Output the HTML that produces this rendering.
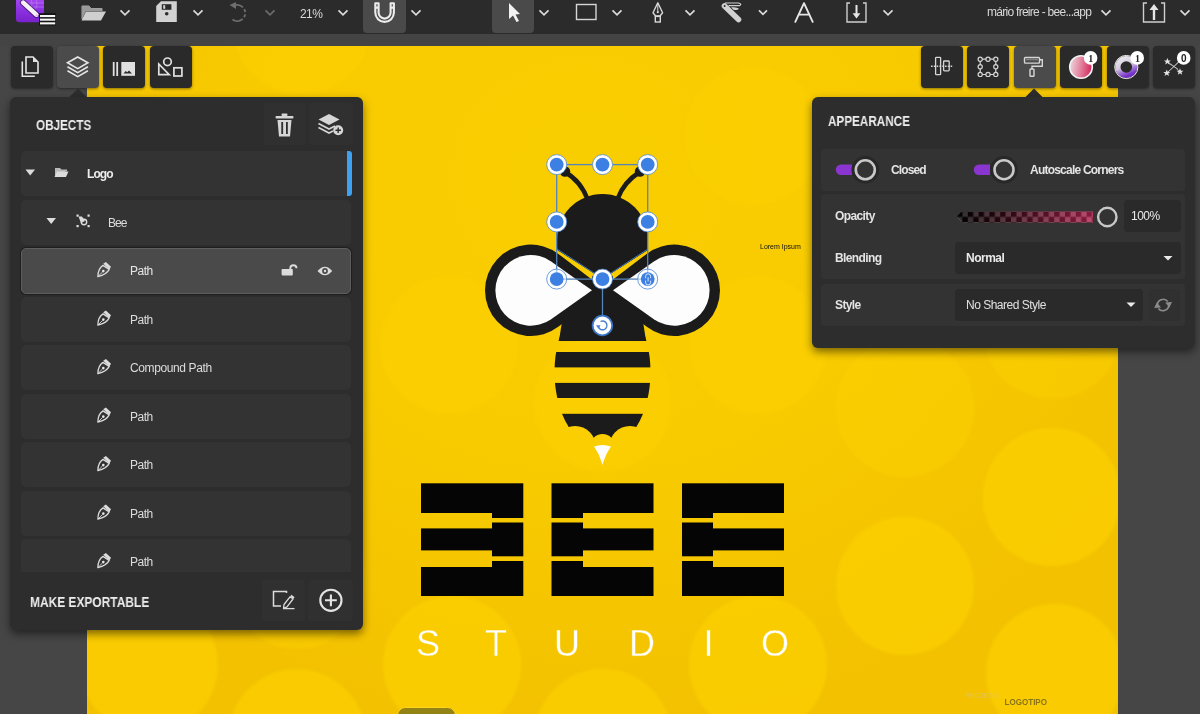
<!DOCTYPE html>
<html><head><meta charset="utf-8">
<style>
*{margin:0;padding:0;box-sizing:border-box}
html,body{width:1200px;height:714px;overflow:hidden;background:#464646;font-family:"Liberation Sans",sans-serif;color:#e2e2e2}
svg{position:absolute;overflow:visible;will-change:transform}
#top{position:absolute;left:0;top:0;width:1200px;height:34px;background:#2b2b2b}
#band{position:absolute;left:0;top:34px;width:1200px;height:12px;background:#444}
#canvas{position:absolute;left:87px;top:46px;width:1031px;height:668px;background:radial-gradient(ellipse 640px 560px at 500px 130px,#f9ce00 0%,#f8cb00 50%,#f3c100 100%);overflow:hidden}
.btn{position:absolute;top:46px;width:41.5px;height:42px;background:#2a2a2a;border-radius:4px;box-shadow:0 1px 3px rgba(0,0,0,.45)}
.rb{width:42px}
.btn.sel{background:#4b4b4b}
.panel{position:absolute;background:#2d2d2d;border-radius:6px;box-shadow:0 4px 9px rgba(0,0,0,.5)}
.row{position:absolute;left:11px;width:330px;height:45px;background:#333;border-radius:5px}
.row.sel{background:#4a4a4a;border:1px solid #5e5e5e;box-shadow:0 0 1px 1px rgba(0,0,0,.35);height:46px}
.t{position:absolute;white-space:nowrap;line-height:1;will-change:transform}
.hbtn{position:absolute;background:#303030;border-radius:3px}
</style></head><body>
<div id="top"></div>
<div id="band"></div>
<div id="canvas">
<svg width="1031" height="668" viewBox="87 46 1031 668" style="left:0;top:0">
  <defs><filter id="bl" x="-20%" y="-20%" width="140%" height="140%"><feGaussianBlur stdDeviation="1.6"/></filter></defs><g fill="#fcd200" filter="url(#bl)"><g opacity=".65"><circle cx="149" cy="665" r="69"/><circle cx="297" cy="738" r="69"/><circle cx="452" cy="665" r="69"/><circle cx="905" cy="586" r="69"/><circle cx="1052" cy="497" r="69"/><circle cx="1055" cy="673" r="69"/><circle cx="758" cy="665" r="69"/><circle cx="603" cy="738" r="69"/></g><g opacity=".4"><circle cx="603" cy="403" r="69"/><circle cx="449" cy="345" r="69"/><circle cx="758" cy="345" r="69"/><circle cx="905" cy="408" r="69"/><circle cx="754" cy="136" r="69"/><circle cx="1052" cy="330" r="69"/><circle cx="297" cy="420" r="69"/><circle cx="149" cy="345" r="69"/><circle cx="302" cy="26" r="69"/><circle cx="297" cy="580" r="69"/></g></g>
  <defs><mask id="bodym" maskUnits="userSpaceOnUse" x="400" y="200" width="400" height="300">
    <rect x="400" y="200" width="400" height="300" fill="#fff"/>
    <g fill="#000">
    <rect x="540" y="341" width="125" height="11"/>
    <rect x="540" y="367.4" width="125" height="15.5"/>
    <rect x="540" y="398" width="125" height="15.8"/>
    <circle cx="575" cy="447" r="21"/><circle cx="630" cy="447" r="21"/><circle cx="602.5" cy="446.5" r="12.5"/><rect x="540" y="446" width="125" height="20"/>
    </g></mask></defs>
  <!-- bee -->
  <g fill="#1b1b1b">
    <path d="M587 198 Q581 182 566 172.5" stroke="#1b1b1b" stroke-width="4.6" fill="none"/>
    <path d="M618 198 Q624 182 639 172.5" stroke="#1b1b1b" stroke-width="4.6" fill="none"/>
    <circle cx="565" cy="171.5" r="5.2"/><circle cx="640" cy="171.5" r="5.2"/>
    <path d="M557 250 L557 239.5 A45.5 45.5 0 0 1 648 239.5 L648 250 L602.5 279 Z"/>
    <ellipse cx="602.5" cy="372" rx="48" ry="77.5" mask="url(#bodym)"/>
    <path d="M566 295 L639 295 L646 341 L559 341 Z" mask="url(#bodym)"/>
    <path d="M606 290.3 L558.6 254 A45.75 45.75 0 1 0 558.6 326.6 Z"/>
    <path d="M599 290.3 L646.4 254 A45.75 45.75 0 1 1 646.4 326.6 Z"/>
    <rect x="592" y="276" width="21" height="30"/>
  </g>
  <path d="M555.5 250.6 L600.5 280 M649.5 250.6 L604.5 280" stroke="#f8cc00" stroke-width="2.3"/>
  <path d="M557 249 L602.5 278.5 L648 249" stroke="#3f78c8" stroke-width="1" fill="none"/>
  <g fill="#fdfdfd">
    <path d="M592 290.35 L551.15 261.48 A35.35 35.35 0 1 0 551.15 319.22 Z"/>
    <path d="M613 290.35 L653.85 261.48 A35.35 35.35 0 1 1 653.85 319.22 Z"/>
  </g>
  <path d="M594 446.5 Q602.5 443.5 611 446.5 Q605.5 454 602.4 465 Q599.5 454 594 446.5 Z" fill="#fdfdfd"/>
  <!-- selection -->
  <g stroke="#5584bb" stroke-width="1.3" fill="none">
    <rect x="556.7" y="164.6" width="91" height="114.5"/>
    <line x1="602.5" y1="279" x2="602.5" y2="316"/>
  </g>
  <g>
    <g fill="#fff" stroke="#4a86d8" stroke-width="0.8">
      <circle cx="556.7" cy="164.6" r="10"/><circle cx="602.5" cy="164.6" r="10"/><circle cx="647.7" cy="164.6" r="10"/>
      <circle cx="556.7" cy="221.9" r="10"/><circle cx="647.7" cy="221.9" r="10"/>
      <circle cx="602.5" cy="279.1" r="10"/>
    </g>
    <g fill="rgba(255,255,255,.55)" stroke="#4a86d8" stroke-width="0.8">
      <circle cx="556.7" cy="279.1" r="10"/><circle cx="647.7" cy="279.1" r="10"/>
    </g>
    <g fill="#3d80e3">
      <circle cx="556.7" cy="164.6" r="6.9"/><circle cx="602.5" cy="164.6" r="6.9"/><circle cx="647.7" cy="164.6" r="6.9"/>
      <circle cx="556.7" cy="221.9" r="6.9"/><circle cx="647.7" cy="221.9" r="6.9"/>
      <circle cx="602.5" cy="279.1" r="6.9"/><circle cx="556.7" cy="279.1" r="6.9"/><circle cx="647.7" cy="279.1" r="6.9"/>
    </g>
    <path d="M645.6 278.2 V276.3 A2.5 2.5 0 0 1 650.6 276.3 V278.2 M645.6 280.6 V282.5 A2.5 2.5 0 0 0 650.6 282.5 V280.6 M648.1 277.3 V281.5" stroke="#e6effa" stroke-width="0.9" fill="none"/>
    <circle cx="602.4" cy="325.5" r="9.8" fill="#fff" stroke="#3a74c4" stroke-width="1.8"/>
    <path d="M598.3 326.5 A4.4 4.4 0 1 0 600.5 321.5" stroke="#4a80d0" stroke-width="1.4" fill="none"/>
    <path d="M596 325.2 L600.6 325.2 L598.3 328.6 Z" fill="#4a80d0"/>
  </g>
  <!-- BEE letters -->
  <g fill="#050505">
    <rect x="421" y="483.3" width="71" height="29.7"/><rect x="421" y="528.4" width="71" height="22"/><rect x="421" y="567" width="71" height="29"/>
    <rect x="492" y="483.3" width="31.3" height="34.7"/><rect x="492" y="522.5" width="31.3" height="33.8"/><rect x="492" y="561" width="31.3" height="35"/>
    <rect x="551.5" y="483.3" width="31.5" height="34.7"/><rect x="551.5" y="522.5" width="31.5" height="33.8"/><rect x="551.5" y="561" width="31.5" height="35"/>
    <rect x="583" y="483.3" width="70.5" height="29.7"/><rect x="583" y="528.4" width="70.5" height="22"/><rect x="583" y="567" width="70.5" height="29"/>
    <rect x="682" y="483.3" width="31" height="34.7"/><rect x="682" y="522.5" width="31" height="33.8"/><rect x="682" y="561" width="31" height="35"/>
    <rect x="713" y="483.3" width="71" height="29.7"/><rect x="713" y="528.4" width="71" height="22"/><rect x="713" y="567" width="71" height="29"/>
  </g>
  <g fill="#fff" font-family="Liberation Sans" font-size="36" text-anchor="middle" stroke="#f7ca00" stroke-width="0.35">
    <text x="428" y="656">S</text><text x="496" y="656">T</text><text x="567" y="656">U</text><text x="642" y="656">D</text><text x="708.5" y="656">I</text><text x="775" y="656">O</text>
  </g>
  <text x="760" y="248.5" font-family="Liberation Sans" font-size="7" fill="#111">Lorem Ipsum</text>
  <text x="965" y="697.7" font-family="Liberation Sans" font-size="8" fill="#e6c64a" textLength="34.5" lengthAdjust="spacingAndGlyphs">PROJETO:</text>
  <text x="1004.5" y="704.8" font-family="Liberation Sans" font-size="9.5" font-weight="bold" fill="#8a7418" textLength="42.5" lengthAdjust="spacingAndGlyphs">LOGOTIPO</text>
  <rect x="397.5" y="707.5" width="58" height="20" rx="8" fill="#928314" stroke="#fbd520" stroke-width="1"/>
</svg>
</div>

<!-- TOP BAR -->
<div id="topicons">
<svg width="1200" height="34" style="left:0;top:0">
  <defs>
    <linearGradient id="pg" x1="0" y1="0" x2="0" y2="1"><stop offset="0" stop-color="#b050f8"/><stop offset=".6" stop-color="#8a30e0"/><stop offset="1" stop-color="#7a22cc"/></linearGradient>
  </defs>
  <!-- app logo -->
  <path d="M16 -6 H44 V19 Q44 22.3 41 22.3 H19.5 Q16 22.3 16 19 Z" fill="url(#pg)"/>
  <path d="M30 -2 Q34 4 30 9 M35 -2 Q39 4 35 9 M28 3 H44 M29 7 H44" stroke="#c58af5" stroke-width="0.8" fill="none" opacity=".7"/>
  <path d="M23.2 2.6 L36.3 14.6" stroke="#1e0a40" stroke-width="6.4" stroke-linecap="round" opacity=".6"/>
  <path d="M23.2 2.6 L36.3 14.6" stroke="#f4f0f6" stroke-width="4.6" stroke-linecap="round"/>
  <path d="M35.5 15.5 L38.5 17 L37 14 Z" fill="#e0b0e0"/>
  <rect x="39" y="13.2" width="17" height="12.3" fill="#151515"/>
  <g fill="#f6f6f6"><rect x="40" y="15" width="15.2" height="2.1"/><rect x="40" y="18.6" width="15.2" height="2.1"/><rect x="40" y="22.3" width="15.2" height="2.1"/></g>
  <!-- folder -->
  <path d="M82 19 V6 H89 L91 8.5 H102 V11" fill="none" stroke="#aaa" stroke-width="1"/>
  <path d="M82 6 H89 L91 8.5 H102 V11 H86 L82 19 Z" fill="#9a9a9a"/>
  <path d="M86 11.5 H106 L101 20.5 H81.5 Z" fill="#cfcfcf"/>
  <!-- floppy -->
  <path d="M161 1.2 H176.8 V22 H156.2 V6 Z" fill="#d2d2d2"/>
  <rect x="161.8" y="4.2" width="9.6" height="5.6" fill="#2b2b2b"/><rect x="163.2" y="5.2" width="2" height="3.6" fill="#d2d2d2"/>
  <circle cx="166.7" cy="13.8" r="1.8" fill="#2b2b2b"/>
  <!-- undo -->
  <path d="M233.5 6 A8 8 0 1 1 232.5 19.5" fill="none" stroke="#6e6e6e" stroke-width="1.8" stroke-dasharray="10 2.2 3 2.2 3 2.2 30"/>
  <path d="M229.5 5 L236 2 L236 9 Z" fill="#6e6e6e"/>
  <!-- magnet highlight -->
  <path d="M363 0 H406 V29 Q406 33 402 33 H367 Q363 33 363 29 Z" fill="#4a4a4a"/>
  <path d="M375.3 3.3 V12.6 A9.3 9.3 0 0 0 393.9 12.6 V3.3 H390.6 V12.6 A6 6 0 0 1 378.6 12.6 V3.3 Z M375.3 7.6 H378.6 M390.6 7.6 H393.9" fill="none" stroke="#ececec" stroke-width="2.1" stroke-linejoin="round"/>
  <!-- select highlight -->
  <path d="M492 0 H534 V29 Q534 33 530 33 H496 Q492 33 492 29 Z" fill="#4a4a4a"/>
  <path d="M509 3 V19 L513 15.5 L516.5 22 L519 21 L515.5 14.5 L520 14 Z" fill="#f2f2f2"/>
  <!-- rect -->
  <rect x="576.5" y="4.5" width="19.5" height="15" fill="none" stroke="#d6d6d6" stroke-width="1.4"/>
  <!-- pen -->
  <path d="M657.8 2.8 L653 12.8 L655.6 16 H660 L662.6 12.8 Z" fill="none" stroke="#d8d8d8" stroke-width="1.4" stroke-linejoin="round"/>
  <line x1="657.8" y1="4.5" x2="657.8" y2="11.5" stroke="#d8d8d8" stroke-width="1"/>
  <circle cx="657.8" cy="12.2" r="1.1" fill="#d8d8d8"/>
  <rect x="655.3" y="16.4" width="5" height="5.6" fill="none" stroke="#d8d8d8" stroke-width="1.4"/>
  <!-- knife -->
  <path d="M724.5 6 L738.5 19.5" stroke="#d2d2d2" stroke-width="5.6" stroke-linecap="round"/>
  <circle cx="724.6" cy="5.9" r="1" fill="#2b2b2b"/>
  <path d="M725 3 H738.5 Q742.5 4.2 739.5 5.6 H728.5" fill="none" stroke="#d2d2d2" stroke-width="1.2"/>
  <path d="M731 7.3 Q737 6.6 739 8.8 Q737.5 10.6 733.5 9.8 Z" fill="#d2d2d2"/>
  <!-- A -->
  <path d="M795.3 21.8 L804 3.2 L812.7 21.8 M798.6 14.6 H809.4" fill="none" stroke="#e6e6e6" stroke-width="1.9" stroke-linejoin="round" stroke-linecap="round"/>
  <!-- import -->
  <path d="M850 3 H847 V22 H866 V3 H863" fill="none" stroke="#cfcfcf" stroke-width="1.4"/>
  <path d="M856.5 5 V15" stroke="#e6e6e6" stroke-width="2"/>
  <path d="M852.6 13.2 L856.5 18.6 L860.4 13.2 Z" fill="#e6e6e6"/>
  <!-- export -->
  <path d="M1147 3 H1143.5 V22 H1164.5 V3 H1161" fill="none" stroke="#cfcfcf" stroke-width="1.4"/>
  <path d="M1154 8 V20" stroke="#e6e6e6" stroke-width="2.4"/>
  <path d="M1149.5 10 L1154 4 L1158.5 10 Z" fill="#e6e6e6"/>
  <!-- chevrons -->
  <g fill="none" stroke="#dadada" stroke-width="1.7" transform="translate(0 -0.6)">
    <path d="M120.5 11 L125 15.5 L129.5 11"/>
    <path d="M193.5 11 L198 15.5 L202.5 11"/>
    <path d="M265.5 11 L270 15.5 L274.5 11" stroke="#6b6b6b"/>
    <path d="M338.5 11 L343 15.5 L347.5 11"/>
    <path d="M411.5 11 L416 15.5 L420.5 11"/>
    <path d="M539.5 11 L544 15.5 L548.5 11"/>
    <path d="M612.5 11 L617 15.5 L621.5 11"/>
    <path d="M685.5 11 L690 15.5 L694.5 11"/>
    <path d="M759 11 L763 15 L767 11"/>
    <path d="M883.5 11 L888 15.5 L892.5 11"/>
    <path d="M1101.5 11 L1106 15.5 L1110.5 11"/>
    <path d="M1180.5 11 L1185 15.5 L1189.5 11"/>
  </g>
</svg>
<div class="t" style="left:300px;top:8px;font-size:12px;letter-spacing:-0.6px;color:#d8d8d8">21%</div>
<div class="t" style="left:987px;top:6px;font-size:12px;letter-spacing:-0.72px;color:#d8d8d8">mário freire - bee...app</div>
</div>

<!-- LEFT TOOLBAR -->
<div class="btn" style="left:11px"></div>
<div class="btn sel" style="left:57px"></div>
<div class="btn" style="left:103px"></div>
<div class="btn" style="left:150px"></div>
<svg width="200" height="100" style="left:0;top:0">
  <g fill="none" stroke="#e6e6e6" stroke-width="1.6">
    <path d="M22.3 61.5 V76.3 H34.8"/>
    <path d="M26 57 H33 L38 62 V73 H26 Z"/>
    <path d="M67.5 62.8 L77.7 57 L87.9 62.8 L77.7 68.6 Z"/>
    <path d="M67.5 66.8 L77.7 72.6 L87.9 66.8"/>
    <path d="M67.5 70.8 L77.7 76.6 L87.9 70.8"/>
    <path d="M145 0"/>
  </g>
  <path d="M33 57 L38 62 H33 Z" fill="#e0e0e0"/>
  <g fill="#e0e0e0">
    <rect x="112.8" y="62" width="1.8" height="14"/><rect x="116.3" y="62" width="1.8" height="14"/>
    <rect x="121.3" y="62" width="13.7" height="13.8"/>
  </g>
  <path d="M123.5 73.5 L125.8 71 L127.3 72.3 L129 70.5 L132 73.5 Z" fill="#2a2a2a"/>
  <g fill="none" stroke="#e0e0e0" stroke-width="1.7">
    <circle cx="167.5" cy="61.8" r="3.8"/>
    <path d="M158.8 64 V74.6 H169.2 Z"/>
    <rect x="173.9" y="67.8" width="8" height="8.2"/>
  </g>
  <path d="M78 88.5 L87 97.5 H69 Z" fill="#2d2d2d"/>
</svg>

<!-- LEFT PANEL -->
<div class="panel" style="left:10px;top:97px;width:353px;height:533px">
  <div class="t" style="left:25.8px;top:21px;font-size:14px;font-weight:bold;color:#ececec;transform:scaleX(.836);transform-origin:0 0">OBJECTS</div>
  <div class="hbtn" style="left:254px;top:6px;width:42px;height:42px"></div>
  <div class="hbtn" style="left:299px;top:6px;width:44px;height:42px"></div>
  <div style="position:absolute;left:0;top:54px;width:353px;height:421px;overflow:hidden">
    <div class="row" style="top:0px"></div>
    <div class="row" style="top:48.5px"></div>
    <div class="row sel" style="top:96.6px"></div>
    <div class="row" style="top:145.5px"></div>
    <div class="row" style="top:194px"></div>
    <div class="row" style="top:242.5px"></div>
    <div class="row" style="top:291px"></div>
    <div class="row" style="top:339.5px"></div>
    <div class="row" style="top:388px"></div>
    <div style="position:absolute;left:337px;top:0;width:5px;height:45px;background:#3da0f0;border-radius:0 3px 3px 0"></div>
    <div class="t" style="left:77px;top:17px;font-size:12px;font-weight:bold;letter-spacing:-0.9px;color:#ececec">Logo</div>
    <div class="t" style="left:98px;top:65.5px;font-size:12px;letter-spacing:-1px;color:#dcdcdc">Bee</div>
    <div class="t" style="left:119.5px;top:114px;font-size:12px;letter-spacing:-0.5px;color:#e6e6e6">Path</div>
    <div class="t" style="left:119.5px;top:162.5px;font-size:12px;letter-spacing:-0.5px;color:#dcdcdc">Path</div>
    <div class="t" style="left:119.5px;top:211px;font-size:12px;letter-spacing:-0.38px;color:#dcdcdc">Compound Path</div>
    <div class="t" style="left:119.5px;top:259.5px;font-size:12px;letter-spacing:-0.5px;color:#dcdcdc">Path</div>
    <div class="t" style="left:119.5px;top:308px;font-size:12px;letter-spacing:-0.5px;color:#dcdcdc">Path</div>
    <div class="t" style="left:119.5px;top:356.5px;font-size:12px;letter-spacing:-0.5px;color:#dcdcdc">Path</div>
    <div class="t" style="left:119.5px;top:405px;font-size:12px;letter-spacing:-0.5px;color:#dcdcdc">Path</div>
  </div>
  <div class="t" style="left:19.6px;top:497.8px;font-size:14px;font-weight:bold;color:#ececec;transform:scaleX(.853);transform-origin:0 0">MAKE EXPORTABLE</div>
  <div class="hbtn" style="left:252px;top:483px;width:43px;height:41px"></div>
  <div class="hbtn" style="left:298px;top:483px;width:45px;height:41px"></div>
</div>
<svg width="370" height="640" style="left:0;top:0">
  <!-- trash -->
  <g fill="#d6d6d6">
    <rect x="275.5" y="116" width="18" height="2.5" rx="1"/>
    <rect x="281.5" y="113.5" width="6" height="2.5" rx="1"/>
    <path d="M277.5 120 H291.5 L290 136.5 H279 Z"/>
  </g>
  <g fill="#2d2d2d"><rect x="281.3" y="122" width="1.8" height="12"/><rect x="286" y="122" width="1.8" height="12"/></g>
  <!-- layers add -->
  <path d="M318.5 119.5 L329 114 L339.5 119.5 L329 125 Z" fill="#d6d6d6"/>
  <path d="M318.5 123.5 L329 129 L335 126" fill="none" stroke="#d6d6d6" stroke-width="1.6"/>
  <path d="M318.5 127.5 L329 133 L333 131" fill="none" stroke="#d6d6d6" stroke-width="1.6"/>
  <circle cx="338.2" cy="130.3" r="5" fill="#d6d6d6"/>
  <path d="M335.5 130.3 H341 M338.2 127.6 V133" stroke="#2d2d2d" stroke-width="1.4"/>
  <!-- tree icons -->
  <path d="M25.5 169.5 H35 L30.2 175.5 Z" fill="#dcdcdc"/>
  <path d="M46.5 218 H56 L51.2 224 Z" fill="#dcdcdc"/>
  <path d="M55 176 V168 H60 L61.5 169.5 H67 V171" fill="#b9b9b9"/>
  <path d="M57 171.5 H68.5 L66 177 H54.5 Z" fill="#dcdcdc"/>
  <g fill="#dcdcdc">
    <rect x="76.5" y="214.5" width="2.2" height="2.2"/><rect x="87.5" y="214.5" width="2.2" height="2.2"/>
    <rect x="76.5" y="225" width="2.2" height="2.2"/><rect x="87.5" y="225" width="2.2" height="2.2"/>
    <path d="M78.5 216.5 L82 216.5 L85 221 L81 223 Z"/>
  </g>
  <circle cx="84" cy="222" r="2.7" fill="none" stroke="#dcdcdc" stroke-width="1.4"/>
  <!-- lock / eye -->
  <rect x="281.6" y="269" width="11.2" height="6.4" rx="0.8" fill="#dcdcdc"/>
  <path d="M290.3 269.5 V268.3 A3.1 3.1 0 0 1 296.5 268.3" fill="none" stroke="#dcdcdc" stroke-width="1.9"/>
  <path d="M317.5 271 Q325 262.5 332.2 271 Q325 279.5 317.5 271 Z" fill="#dcdcdc"/>
  <circle cx="325" cy="271" r="2.9" fill="#4a4a4a"/><circle cx="325" cy="271" r="1.2" fill="#dcdcdc"/>
  <!-- footer icons -->
  <path d="M286.5 593 V591.5 H273.5 V606 H281" fill="none" stroke="#dcdcdc" stroke-width="1.5"/>
  <path d="M283.5 608.3 L284 604.5 L290 596.8 L293 599 L287 606.8 Z" fill="none" stroke="#dcdcdc" stroke-width="1.3" stroke-linejoin="round"/>
  <path d="M290.3 596.3 L291.5 594.8 L294.6 597.2 L293.4 598.7 Z" fill="#dcdcdc"/>
  <path d="M283 608.6 H294.5" stroke="#dcdcdc" stroke-width="1.3"/>
  <circle cx="330.9" cy="600.3" r="10.6" fill="none" stroke="#e4e4e4" stroke-width="2.1"/>
  <path d="M325 600.3 H336.8 M330.9 594.4 V606.2" stroke="#e4e4e4" stroke-width="2.1"/>
</svg>
<svg width="370" height="600" style="left:0;top:0" id="pens">
  <defs>
    <g id="pen">
      <path d="M-6.9 6.6 Q-6.8 -1.5 -1.8 -4.6 L4.4 -0.6 Q1.8 4.6 -6.9 6.6 Z" fill="none" stroke="#dcdcdc" stroke-width="1.3" stroke-linejoin="round"/>
      <path d="M-1.6 -6.2 L1.1 -8 L6.2 -3.3 L4.6 -0.6 Z" fill="#dcdcdc"/>
      <circle cx="-1.5" cy="1.1" r="1.3" fill="#e8e8e8"/>
      <path d="M-6.9 6.6 L-2.3 2" stroke="#dcdcdc" stroke-width="0.9"/>
    </g>
  </defs>
  <use href="#pen" x="104.8" y="270"/>
  <use href="#pen" x="104.8" y="318.5"/>
  <use href="#pen" x="104.8" y="367"/>
  <use href="#pen" x="104.8" y="415.5"/>
  <use href="#pen" x="104.8" y="464"/>
  <use href="#pen" x="104.8" y="512.5"/>
  <use href="#pen" x="104.8" y="561"/>
</svg>

<!-- RIGHT TOOLBAR -->
<div class="btn rb" style="left:921px"></div>
<div class="btn rb" style="left:967px"></div>
<div class="btn sel rb" style="left:1014px"></div>
<div class="btn rb" style="left:1060px"></div>
<div class="btn rb" style="left:1107px"></div>
<div class="btn rb" style="left:1153px"></div>
<svg width="1200" height="100" style="left:0;top:0">
  <defs>
    <linearGradient id="rg" x1="0" y1="0" x2="1" y2="0.15"><stop offset="0" stop-color="#ecdfe3"/><stop offset=".5" stop-color="#e58aa5"/><stop offset="1" stop-color="#d42f62"/></linearGradient>
    <linearGradient id="vg" x1="0.2" y1="0" x2="0.6" y2="1"><stop offset="0" stop-color="#e6e2ea"/><stop offset=".45" stop-color="#d6cce2"/><stop offset=".75" stop-color="#a070d8"/><stop offset="1" stop-color="#7430c8"/></linearGradient>
  </defs>
  <!-- align -->
  <g fill="none" stroke="#d6d6d6" stroke-width="1.3">
    <rect x="935.6" y="57.3" width="5" height="17.4" rx="0.8"/>
    <rect x="943.6" y="61" width="5.6" height="9.9" rx="0.8"/>
    <path d="M931 66.3 H952.5" stroke-dasharray="1.6 1.2" stroke-width="1.4"/>
  </g>
  <!-- transform box -->
  <g fill="none" stroke="#d6d6d6" stroke-width="1.2">
    <path d="M980.2 59 V74.5 M995.8 59 V74.5 M980.2 59.2 H995.8 M980.2 74.5 H995.8"/>
    <g fill="#2a2a2a">
    <circle cx="980.2" cy="59.2" r="2.1"/><circle cx="988" cy="59.2" r="2.1"/><circle cx="995.8" cy="59.2" r="2.1"/>
    <circle cx="980.2" cy="66.8" r="2.1"/><circle cx="995.8" cy="66.8" r="2.1"/>
    <circle cx="980.2" cy="74.4" r="2.1"/><circle cx="988" cy="74.4" r="2.1"/><circle cx="995.8" cy="74.4" r="2.1"/>
    </g>
  </g>
  <!-- roller -->
  <g fill="none" stroke="#d6d6d6" stroke-width="1.4">
    <rect x="1024.5" y="57.5" width="15" height="5.6" rx="0.8"/>
    <path d="M1039.5 59.8 H1042.3 V66.2 H1032 V69"/>
    <rect x="1030" y="69" width="4" height="7.2" rx="0.8"/>
  </g>
  <path d="M1026 59.7 H1038" stroke="#d6d6d6" stroke-width="0.8" opacity=".6"/>
  <!-- fill -->
  <circle cx="1081" cy="67" r="11.3" fill="url(#rg)" stroke="#f2f2f2" stroke-width="1.6"/>
  <circle cx="1090.6" cy="57.9" r="6.8" fill="#fff"/>
  <text x="1090.8" y="61.6" font-family="Liberation Serif" font-size="10" font-weight="bold" text-anchor="middle" fill="#222">1</text>
  <!-- stroke -->
  <circle cx="1126.3" cy="67" r="8.4" fill="none" stroke="url(#vg)" stroke-width="5.2"/>
  <circle cx="1126.3" cy="67" r="11.6" fill="none" stroke="#eee" stroke-width="1"/>
  <circle cx="1137.2" cy="57.9" r="6.8" fill="#fff"/>
  <text x="1137.4" y="61.6" font-family="Liberation Serif" font-size="10" font-weight="bold" text-anchor="middle" fill="#222">1</text>
  <!-- stars -->
  <g stroke="#cfcfcf" stroke-width="0.7" fill="none">
    <path d="M1167.4 61.5 L1174 66.4 L1180 71.8 M1166.8 73 L1174 66.4 L1180 60 M1168 63 L1178 69 M1168 72 L1179 62"/>
  </g>
  <g fill="#e2e2e2">
    <path id="st" d="M0 -3.6 L1 -1.1 L3.5 -1.1 L1.5 0.5 L2.2 3 L0 1.5 L-2.2 3 L-1.5 0.5 L-3.5 -1.1 L-1 -1.1 Z" transform="translate(1167.4 61.5)"/>
    <use href="#st" transform="translate(-0.6 11.5)"/>
    <use href="#st" transform="translate(12.6 10.3)"/>
  </g>
  <circle cx="1183.7" cy="57.9" r="6.8" fill="#fff"/>
  <text x="1183.7" y="61.6" font-family="Liberation Sans" font-size="10" font-weight="bold" text-anchor="middle" fill="#222">0</text>
  <path d="M1034 88.5 L1043 97.5 H1025 Z" fill="#2d2d2d"/>
</svg>

<!-- APPEARANCE PANEL -->
<div class="panel" style="left:812px;top:97px;width:383px;height:251px">
  <div class="t" style="left:15.7px;top:17.3px;font-size:14px;font-weight:bold;color:#ececec;transform:scaleX(.836);transform-origin:0 0">APPEARANCE</div>
  <div style="position:absolute;left:9px;top:52px;width:364px;height:42px;background:#333;border-radius:4px"></div>
  <div style="position:absolute;left:9px;top:97px;width:364px;height:85px;background:#333;border-radius:4px"></div>
  <div style="position:absolute;left:9px;top:187px;width:364px;height:42px;background:#333;border-radius:4px"></div>
  <div class="t" style="left:79px;top:67px;font-size:12px;font-weight:bold;letter-spacing:-0.87px;color:#e4e4e4">Closed</div>
  <div class="t" style="left:217.5px;top:67px;font-size:12px;font-weight:bold;letter-spacing:-0.78px;color:#e4e4e4">Autoscale Corners</div>
  <div class="t" style="left:23px;top:113px;font-size:12px;font-weight:bold;letter-spacing:-0.6px;color:#e4e4e4">Opacity</div>
  <div class="t" style="left:23px;top:155px;font-size:12px;font-weight:bold;letter-spacing:-0.6px;color:#e4e4e4">Blending</div>
  <div class="t" style="left:23px;top:202px;font-size:12px;font-weight:bold;letter-spacing:-0.6px;color:#e4e4e4">Style</div>
  <div style="position:absolute;left:312px;top:102.5px;width:56.5px;height:32.5px;background:#2a2a2a;border-radius:4px"></div>
  <div class="t" style="left:318.5px;top:113px;font-size:12px;letter-spacing:-0.5px;color:#eaeaea">100%</div>
  <div style="position:absolute;left:142.5px;top:145px;width:226px;height:32px;background:#2a2a2a;border-radius:4px"></div>
  <div class="t" style="left:154px;top:155px;font-size:12px;font-weight:bold;letter-spacing:-0.5px;color:#eaeaea">Normal</div>
  <div style="position:absolute;left:142.5px;top:191.5px;width:188.5px;height:32px;background:#2a2a2a;border-radius:4px"></div>
  <div class="t" style="left:154px;top:202px;font-size:12px;letter-spacing:-0.5px;color:#e0e0e0">No Shared Style</div>
  <div style="position:absolute;left:337px;top:191.5px;width:31px;height:32px;background:#303030;border-radius:4px"></div>
</div>
<svg width="1200" height="360" style="left:0;top:0">
  <defs>
    <pattern id="chk" width="10.8" height="10.8" patternUnits="userSpaceOnUse" x="957" y="211.5">
      <rect width="10.8" height="10.8" fill="#d8d8d8"/><rect width="5.4" height="5.4" fill="#000"/><rect x="5.4" y="5.4" width="5.4" height="5.4" fill="#000"/>
    </pattern>
    <linearGradient id="og" x1="0" x2="1"><stop offset="0" stop-color="#000"/><stop offset=".3" stop-color="#2a0812"/><stop offset="1" stop-color="#b02450"/></linearGradient>
  </defs>
  <!-- toggles -->
  <g>
    <path d="M841 164.5 H852 V175 H841 A5.2 5.2 0 0 1 841 164.5 Z" fill="#8a35d0"/>
    <circle cx="865.3" cy="169.8" r="13.8" fill="#282828"/>
    <circle cx="865.3" cy="169.8" r="9.5" fill="#333" stroke="#c8c8c8" stroke-width="2.6"/>
    <path d="M979 164.5 H990 V175 H979 A5.2 5.2 0 0 1 979 164.5 Z" fill="#8a35d0"/>
    <circle cx="1004" cy="169.7" r="13.8" fill="#282828"/>
    <circle cx="1004" cy="169.7" r="9.5" fill="#333" stroke="#c8c8c8" stroke-width="2.6"/>
  </g>
  <!-- opacity slider -->
  <path d="M957 216.5 L962 211.5 H1093 V222.5 H962 Z" fill="url(#chk)"/>
  <path d="M957 216.5 L962 211.5 H1093 V222.5 H962 Z" fill="url(#og)" opacity=".78"/>
  <circle cx="1107.3" cy="217" r="9.2" fill="#333" stroke="#c8c8c8" stroke-width="2.4"/>
  <!-- dropdown arrows -->
  <path d="M1163.5 256 H1172.5 L1168 260.5 Z" fill="#eaeaea"/>
  <path d="M1126.5 302.5 H1135.5 L1131 307 Z" fill="#eaeaea"/>
  <!-- refresh -->
  <g fill="none" stroke="#8c8c8c" stroke-width="1.6">
    <path d="M1157.4 305.5 A5.8 5.8 0 0 1 1167.8 301.6"/>
    <path d="M1168.8 304.5 A5.8 5.8 0 0 1 1158.4 308.4"/>
  </g>
  <path d="M1165.2 302.6 L1172 302 L1169.4 307.6 Z" fill="#8c8c8c"/>
  <path d="M1161 307.4 L1154.2 308 L1156.8 302.4 Z" fill="#8c8c8c"/>
</svg>
</body></html>
